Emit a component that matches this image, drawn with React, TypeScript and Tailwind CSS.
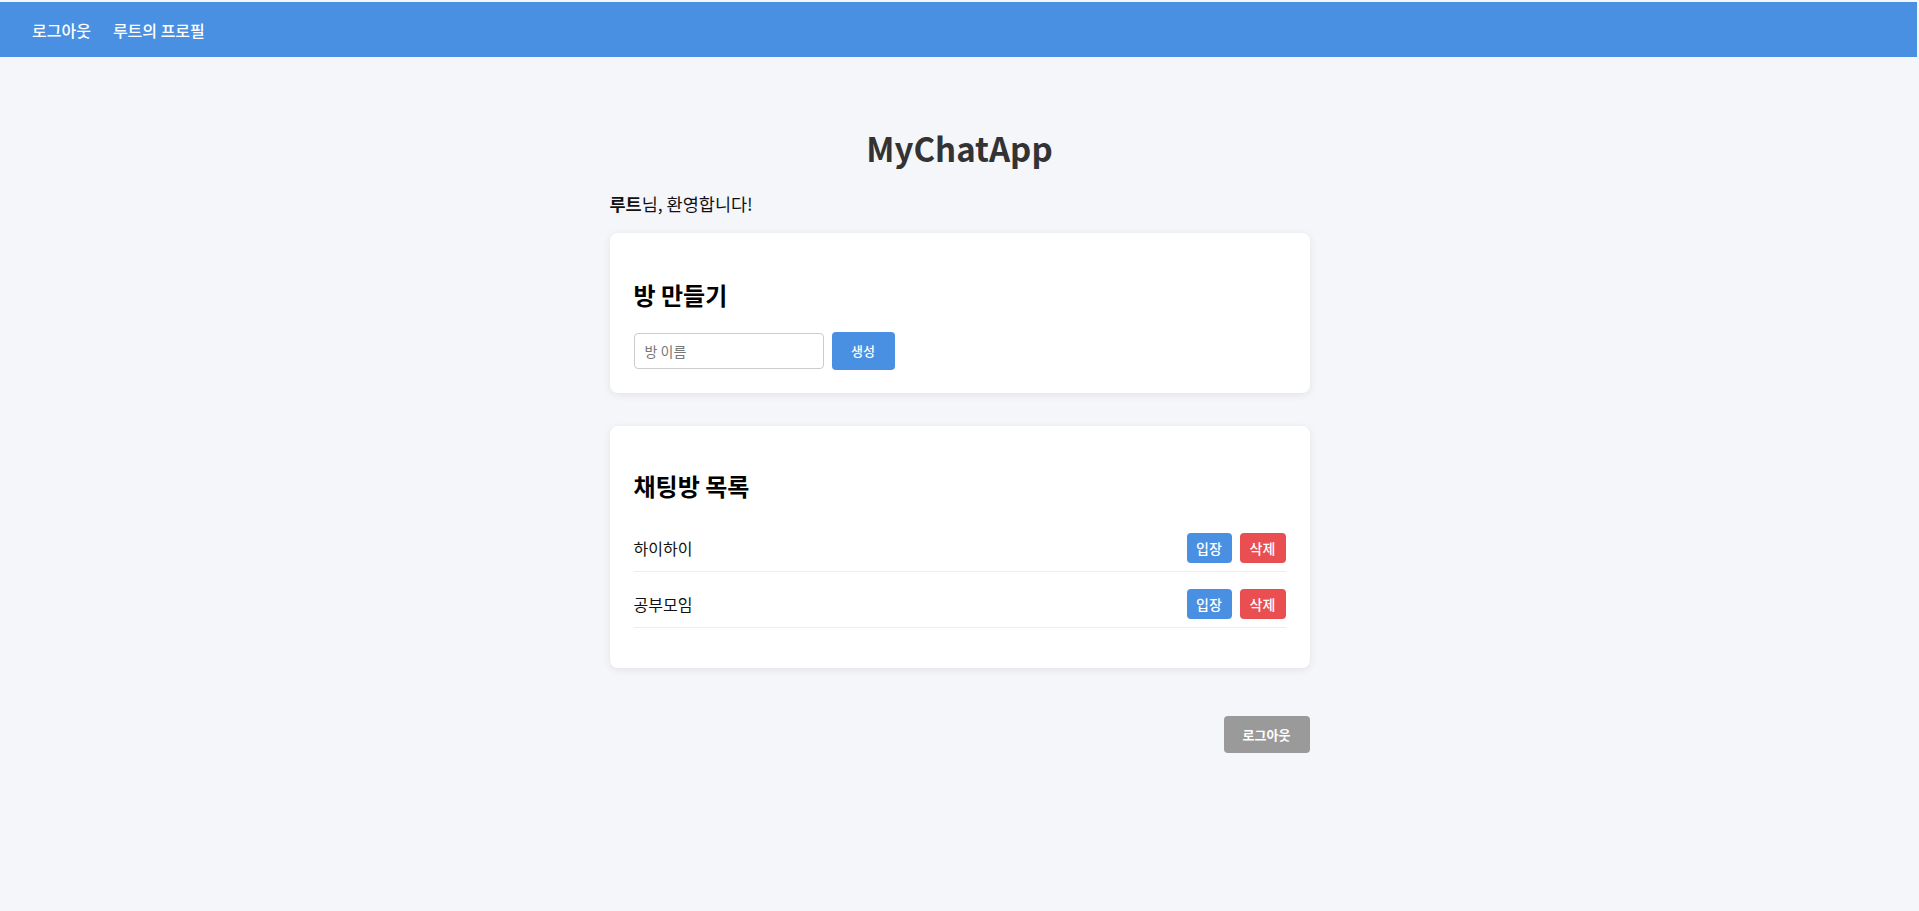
import React from "react";

const font = { fontFamily: '"Noto Sans CJK KR", "Noto Sans", sans-serif' };

function Row({ name }: { name: string }) {
  return (
    <li className="flex items-center justify-between pt-[17px] pb-[8px] border-b border-[#eeeeee]">
      <span className="text-[16px] leading-[22px] text-[#111]">{name}</span>
      <div className="flex gap-[8px]">
        <button className="h-[30px] w-[45px] rounded-[4px] bg-[#4a90e2] text-white text-[14px] font-medium leading-none">
          입장
        </button>
        <button className="h-[30px] w-[46px] rounded-[4px] bg-[#e94f50] text-white text-[14px] font-medium leading-none">
          삭제
        </button>
      </div>
    </li>
  );
}

export default function App() {
  return (
    <div className="min-h-[911px] bg-[#f4f6fa] pt-[2px]" style={font}>
      <nav className="h-[55px] mr-[2px] bg-[#4a90e2] flex items-center pl-[32px] gap-[22px] text-white text-[16px] font-medium">
        <span>로그아웃</span>
        <span>루트의 프로필</span>
      </nav>
      <main className="w-[700px] mx-auto pt-[71px]">
        <h1 className="text-center text-[33px] leading-[40px] font-bold text-[#333]">MyChatApp</h1>
        <p className="mt-[22px] text-[17.5px] leading-[27px] text-[#111]">
          <b className="font-bold">루트</b>님, 환영합니다!
        </p>
        <section className="mt-[16px] bg-white rounded-[8px] shadow-[0_2px_8px_rgba(0,0,0,0.08)] px-6 pt-6 pb-[23px]">
          <h2 className="mt-[23px] text-[24px] leading-[30px] font-bold text-black">방 만들기</h2>
          <div className="mt-[22px] flex items-center gap-[8px] h-[38px]">
            <input
              placeholder="방 이름"
              className="w-[190px] h-[36px] border border-[#cccccc] rounded-[4px] px-[10px] text-[14px] outline-none placeholder:text-[#777]"
            />
            <button className="w-[63px] h-[38px] rounded-[4px] bg-[#4a90e2] text-white text-[13px] font-medium">
              생성
            </button>
          </div>
        </section>
        <section className="mt-[33px] bg-white rounded-[8px] shadow-[0_2px_8px_rgba(0,0,0,0.08)] px-6 pt-6 pb-6">
          <h2 className="mt-[21px] text-[24px] leading-[30px] font-bold text-black">채팅방 목록</h2>
          <ul className="mt-[15px] mb-[16px]">
            <Row name="하이하이" />
            <Row name="공부모임" />
          </ul>
        </section>
        <div className="mt-[48px] flex justify-end">
          <button className="w-[86px] h-[37px] rounded-[4px] bg-[#9a9a9a] text-white text-[13px] font-bold">
            로그아웃
          </button>
        </div>
      </main>
    </div>
  );
}
